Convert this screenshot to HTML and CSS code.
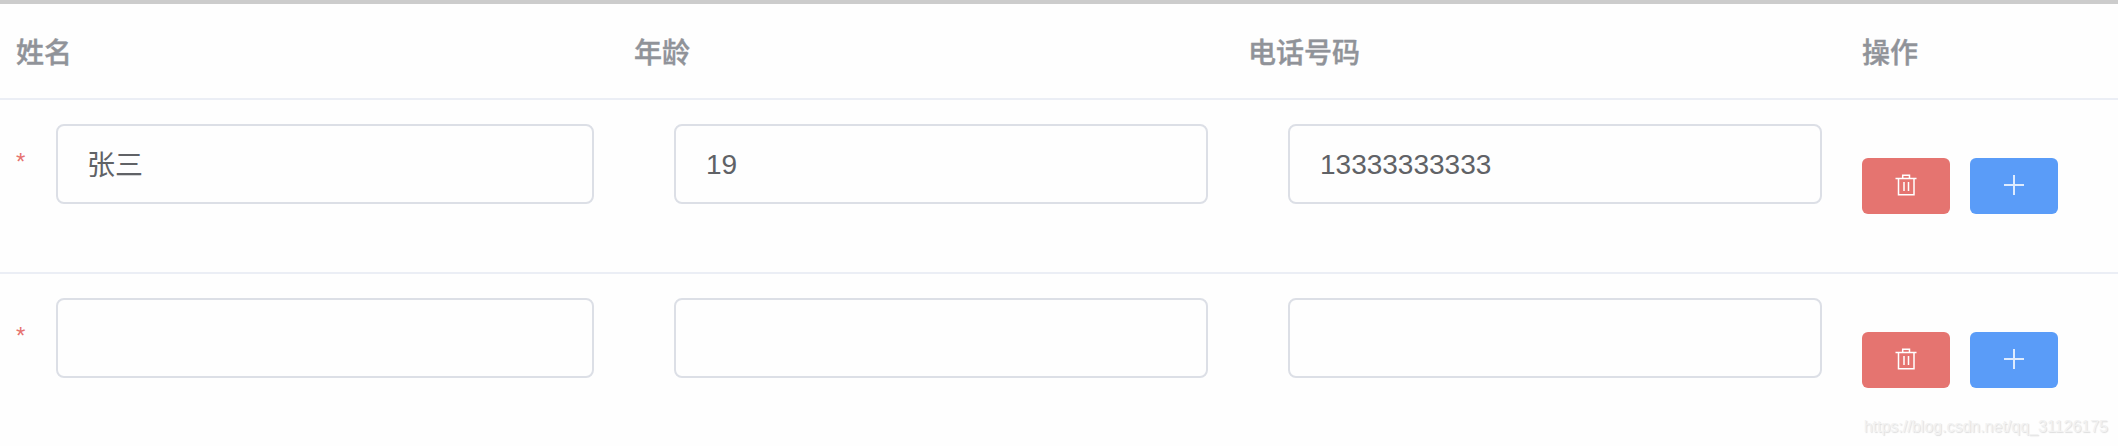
FILE: index.html
```html
<!DOCTYPE html>
<html lang="zh-CN">
<head>
<meta charset="utf-8">
<title>联系人</title>
<link rel="stylesheet" href="styles.css">
</head>
<body>
<svg width="0" height="0" class="sprite">
  <symbol id="trash" viewBox="0 0 24 24">
    <path d="M1.5 5.5H22.5M8.7 5V2.2H15.5V5M4.5 5V21.8H20V5M10 9V18M14.5 9V18" fill="none" stroke="#fff" stroke-width="1.5"/>
  </symbol>
  <symbol id="plus" viewBox="0 0 24 24">
    <path d="M2 12H22M12 2V22" fill="none" stroke="#fff" stroke-opacity=".8" stroke-width="2"/>
  </symbol>
</svg>
<main class="table">
  <div class="row head">
    <div class="th">姓名</div><div class="th">年龄</div><div class="th">电话号码</div><div class="th">操作</div>
  </div>
  <div class="row body">
    <div class="cell"><span class="star">*</span><input class="field name" value="张三"></div>
    <div class="cell"><input class="field number" value="19"></div>
    <div class="cell"><input class="field number" value="13333333333"></div>
    <div class="actions">
      <button class="btn danger"><svg class="icon"><use href="#trash"/></svg></button>
      <button class="btn primary"><svg class="icon"><use href="#plus"/></svg></button>
    </div>
  </div>
  <div class="row body last">
    <div class="cell"><span class="star">*</span><input class="field name"></div>
    <div class="cell"><input class="field number"></div>
    <div class="cell"><input class="field number"></div>
    <div class="actions">
      <button class="btn danger"><svg class="icon"><use href="#trash"/></svg></button>
      <button class="btn primary"><svg class="icon"><use href="#plus"/></svg></button>
    </div>
  </div>
</main>
<div class="watermark">https://blog.csdn.net/qq_31126175</div>
</body>
</html>
```
FILE: styles.css
```css
* { box-sizing: border-box; }
body {
  margin: 0;
  height: 446px;
  overflow: hidden;
  background: #fefefe;
  color: #606266;
  font-family: "Liberation Sans", "Noto Sans CJK SC", sans-serif;
  font-size: 28px;
}
.sprite { position: absolute; }
.table { border-top: 4px solid #ccc; }
.row {
  display: grid;
  grid-template-columns: 618px 614px 614px 1fr;
  border-bottom: 2px solid #ebeef5;
}
.head { height: 96px; align-items: center; }
.th {
  padding: 0 16px;
  line-height: 46px;
  color: #909399;
  font-weight: 500;
  -webkit-text-stroke: 0.4px #909399;
  font-family: "Noto Sans CJK SC", sans-serif;
}
.body { height: 174px; padding-top: 24px; }
.last { border-bottom: 0; height: 172px; }
.cell {
  display: flex;
  align-items: flex-start;
  justify-content: flex-end;
  padding: 0 24px 0 16px;
}
.star {
  width: 40px;
  color: #e6736f;
  font-size: 24px;
  line-height: 75px;
}
.field {
  width: 534px;
  height: 80px;
  padding: 0 30px;
  border: 2px solid #dcdfe6;
  border-radius: 8px;
  background: transparent;
  color: #606266;
  font: inherit;
  outline: none;
}
.name { width: 538px; padding: 0 29px 2px; }
.number { padding-top: 2px; }
.actions { display: flex; gap: 20px; padding: 34px 0 0 16px; }
.btn {
  display: flex;
  align-items: center;
  justify-content: center;
  width: 88px;
  height: 56px;
  padding: 0 0 2px;
  border: 0;
  border-radius: 6px;
}
.danger { background: #e57470; }
.primary { background: #5a9cf8; }
.icon { width: 24px; height: 24px; }
.watermark {
  position: absolute;
  right: 10px;
  bottom: 10px;
  color: #f2f2f2;
  font-size: 16px;
  line-height: 18px;
  text-shadow: 1px 1px 1px #ddd;
}
```
